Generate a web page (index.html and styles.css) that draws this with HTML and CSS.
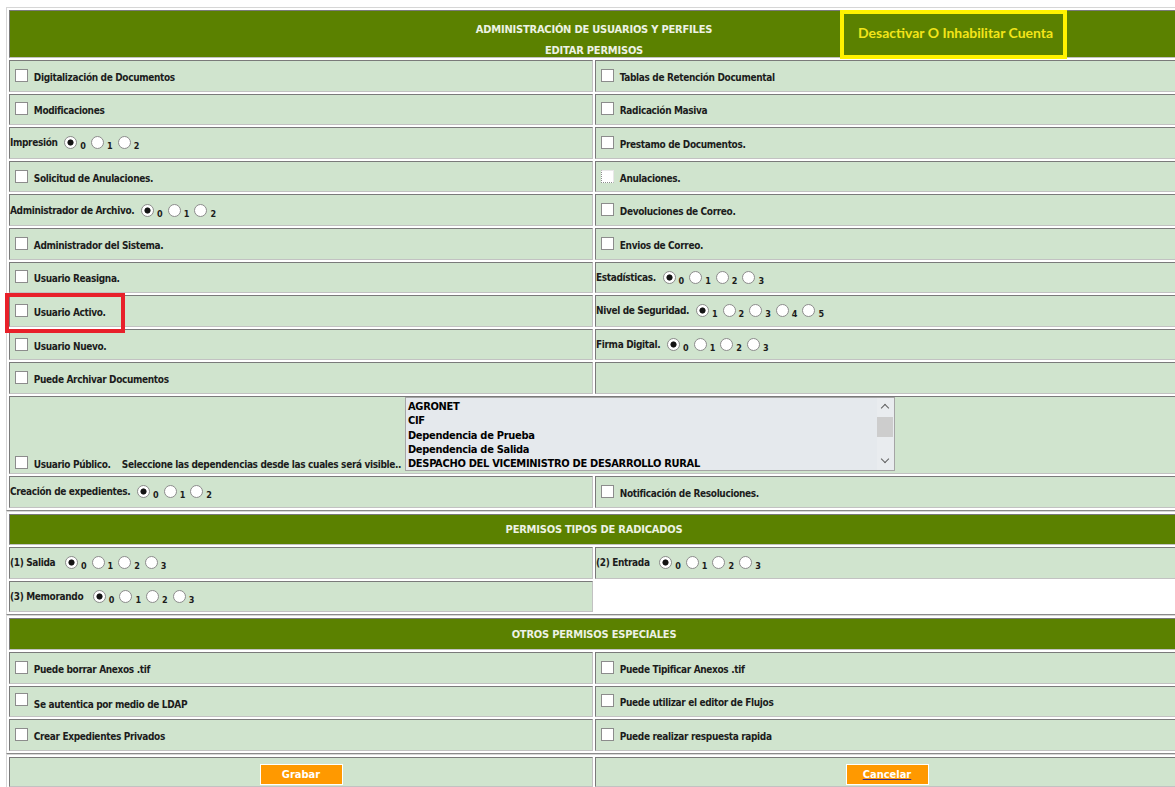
FILE: index.html
```html
<!DOCTYPE html>
<html lang="es">
<head>
<meta charset="utf-8">
<title>Editar permisos</title>
<link rel="stylesheet" href="styles.css">
</head>
<body>
<div class="page">

  <table class="grid">
    <colgroup><col class="half"><col class="half"></colgroup>
    <tr>
      <td colspan="2" class="head head-main">
        <div class="head-inner">
          <div class="head-line">ADMINISTRACIÓN DE USUARIOS Y PERFILES</div>
          <div class="head-line">EDITAR PERMISOS</div>
          <a class="deactivate" href="#">Desactivar O Inhabilitar Cuenta</a>
        </div>
      </td>
    </tr>
    <tr>
      <td><input type="checkbox" class="cb"> Digitalización de Documentos</td>
      <td><input type="checkbox" class="cb"> Tablas de Retención Documental</td>
    </tr>
    <tr>
      <td><input type="checkbox" class="cb"> Modificaciones</td>
      <td><input type="checkbox" class="cb"> Radicación Masiva</td>
    </tr>
    <tr>
      <td>Impresión <input type="radio" name="imp" class="rb" checked><span class="n">0</span><input type="radio" name="imp" class="rb"><span class="n">1</span><input type="radio" name="imp" class="rb"><span class="n">2</span></td>
      <td><input type="checkbox" class="cb"> Prestamo de Documentos.</td>
    </tr>
    <tr>
      <td><input type="checkbox" class="cb"> Solicitud de Anulaciones.</td>
      <td><input type="checkbox" class="cb cb-focus"> Anulaciones.</td>
    </tr>
    <tr>
      <td>Administrador de Archivo. <input type="radio" name="arc" class="rb" checked><span class="n">0</span><input type="radio" name="arc" class="rb"><span class="n">1</span><input type="radio" name="arc" class="rb"><span class="n">2</span></td>
      <td><input type="checkbox" class="cb"> Devoluciones de Correo.</td>
    </tr>
    <tr>
      <td><input type="checkbox" class="cb"> Administrador del Sistema.</td>
      <td><input type="checkbox" class="cb"> Envios de Correo.</td>
    </tr>
    <tr>
      <td><input type="checkbox" class="cb"> Usuario Reasigna.</td>
      <td>Estadísticas. <input type="radio" name="est" class="rb" checked><span class="n">0</span><input type="radio" name="est" class="rb"><span class="n">1</span><input type="radio" name="est" class="rb"><span class="n">2</span><input type="radio" name="est" class="rb"><span class="n">3</span></td>
    </tr>
    <tr>
      <td><input type="checkbox" class="cb"> Usuario Activo.</td>
      <td>Nivel de Seguridad. <input type="radio" name="niv" class="rb" checked><span class="n">1</span><input type="radio" name="niv" class="rb"><span class="n">2</span><input type="radio" name="niv" class="rb"><span class="n">3</span><input type="radio" name="niv" class="rb"><span class="n">4</span><input type="radio" name="niv" class="rb"><span class="n">5</span></td>
    </tr>
    <tr>
      <td><input type="checkbox" class="cb"> Usuario Nuevo.</td>
      <td>Firma Digital. <input type="radio" name="fir" class="rb" checked><span class="n">0</span><input type="radio" name="fir" class="rb"><span class="n">1</span><input type="radio" name="fir" class="rb"><span class="n">2</span><input type="radio" name="fir" class="rb"><span class="n">3</span></td>
    </tr>
    <tr>
      <td><input type="checkbox" class="cb"> Puede Archivar Documentos</td>
      <td></td>
    </tr>
    <tr>
      <td colspan="2" class="public"><input type="checkbox" class="cb"> Usuario Público.&nbsp;&nbsp;&nbsp; Seleccione las dependencias desde las cuales será visible.. <div class="listbox"><div class="listbox-body"><div class="list-items"><div>AGRONET</div><div>CIF</div><div>Dependencia de Prueba</div><div>Dependencia de Salida</div><div>DESPACHO DEL VICEMINISTRO DE DESARROLLO RURAL</div></div><div class="scroll"><span class="arrow up"></span><span class="thumb"></span><span class="arrow down"></span></div></div></div></td>
    </tr>
    <tr>
      <td>Creación de expedientes. <input type="radio" name="exp" class="rb" checked><span class="n">0</span><input type="radio" name="exp" class="rb"><span class="n">1</span><input type="radio" name="exp" class="rb"><span class="n">2</span></td>
      <td><input type="checkbox" class="cb"> Notificación de Resoluciones.</td>
    </tr>
  </table>

  <table class="grid">
    <colgroup><col class="half"><col class="half"></colgroup>
    <tr><td colspan="2" class="head">PERMISOS TIPOS DE RADICADOS</td></tr>
    <tr>
      <td>(1) Salida&nbsp; <input type="radio" name="sal" class="rb" checked><span class="n">0</span><input type="radio" name="sal" class="rb"><span class="n">1</span><input type="radio" name="sal" class="rb"><span class="n">2</span><input type="radio" name="sal" class="rb"><span class="n">3</span></td>
      <td>(2) Entrada&nbsp; <input type="radio" name="ent" class="rb" checked><span class="n">0</span><input type="radio" name="ent" class="rb"><span class="n">1</span><input type="radio" name="ent" class="rb"><span class="n">2</span><input type="radio" name="ent" class="rb"><span class="n">3</span></td>
    </tr>
    <tr>
      <td>(3) Memorando&nbsp; <input type="radio" name="mem" class="rb" checked><span class="n">0</span><input type="radio" name="mem" class="rb"><span class="n">1</span><input type="radio" name="mem" class="rb"><span class="n">2</span><input type="radio" name="mem" class="rb"><span class="n">3</span></td>
    </tr>
  </table>

  <table class="grid">
    <colgroup><col class="half"><col class="half"></colgroup>
    <tr><td colspan="2" class="head">OTROS PERMISOS ESPECIALES</td></tr>
    <tr>
      <td><input type="checkbox" class="cb"> Puede borrar Anexos .tif</td>
      <td><input type="checkbox" class="cb"> Puede Tipificar Anexos .tif</td>
    </tr>
    <tr>
      <td><input type="checkbox" class="cb cb-up"> Se autentica por medio de LDAP</td>
      <td><input type="checkbox" class="cb"> Puede utilizar el editor de Flujos</td>
    </tr>
    <tr>
      <td><input type="checkbox" class="cb"> Crear Expedientes Privados</td>
      <td><input type="checkbox" class="cb"> Puede realizar respuesta rapida</td>
    </tr>
  </table>

  <table class="grid">
    <colgroup><col class="half"><col class="half"></colgroup>
    <tr>
      <td class="actions"><span class="btn">Grabar</span></td>
      <td class="actions"><a class="btn" href="#">Cancelar</a></td>
    </tr>
  </table>

  <div class="mark-red"></div>
</div>
</body>
</html>
```

FILE: styles.css
```css
html, body {
  margin: 0;
  background: #fff;
  overflow: hidden;
}

.page {
  position: relative;
  padding: 7px 0 0 6px;
}

.grid {
  width: 1176px;
  table-layout: fixed;
  border-collapse: separate;
  border-spacing: 2px;
  border: 1px solid;
  border-color: #d6d6d6 #8a8a8a #8a8a8a #d6d6d6;
  background: #fff;
}

.half { width: 50%; }

.grid td {
  box-sizing: border-box;
  height: 31.6px;
  padding: 0;
  background: #d0e4ce;
  border: 1px solid;
  border-color: #7a7a7a #c2c2c2 #c2c2c2 #7a7a7a;
  vertical-align: middle;
  white-space: nowrap;
  color: #1c1c1c;
  font: bold 10px "DejaVu Sans Condensed", "DejaVu Sans", sans-serif;
  letter-spacing: -0.35px;
}

.grid td.head {
  background: #5b8100;
  color: #edf2e4;
  text-align: center;
  font-size: 11px;
  letter-spacing: -0.2px;
}

.head-inner {
  position: relative;
  height: 46px;
  padding-top: 8px;
  box-sizing: border-box;
}

.head-line {
  line-height: 21px;
}

/* account deactivation link, boxed in yellow */
.deactivate {
  position: absolute;
  left: 830px;
  top: -1px;
  width: 205px;
  height: 41px;
  border: 4px solid #fff200;
  color: #f2e51a;
  text-decoration: none;
  font: 700 14px Lato, "Open Sans", sans-serif;
  letter-spacing: 0;
  line-height: 38px;
  text-align: left;
  padding-left: 14px;
  box-sizing: content-box;
}

/* checkbox */
.cb {
  appearance: none;
  -webkit-appearance: none;
  width: 13px;
  height: 13px;
  margin: 0 3px 0 5px;
  border: 1px solid #8c8c8c;
  background: #fff;
  vertical-align: -1px;
  box-sizing: border-box;
}

.cb-up {
  vertical-align: 2px;
}

.cb-focus {
  border-style: solid solid dotted dotted;
  border-color: #e8e8e8 #e8e8e8 #8c8c8c #8c8c8c;
}

/* radio */
.rb {
  appearance: none;
  -webkit-appearance: none;
  width: 13px;
  height: 13px;
  margin: 0 3px 0 4px;
  border: 1px solid #8c8c8c;
  border-radius: 50%;
  background: #fff;
  vertical-align: -3px;
  box-sizing: border-box;
}

.rb:checked {
  background: radial-gradient(circle, #141414 0 2.7px, #fff 3.4px);
}

.n {
  position: relative;
  top: 3px;
  font-size: 9px;
  letter-spacing: 0;
  margin-right: 1px;
}

/* dependency list */
.grid td.public {
  height: 78px;
  vertical-align: bottom;
  padding-bottom: 2px;
}

.listbox {
  display: inline-block;
  overflow: hidden;
  vertical-align: -3px;
  width: 490px;
  height: 74px;
  margin-left: 1px;
  box-sizing: border-box;
  border: 1px solid #a5a5a5;
  background: #e5e9ed;
  color: #000;
}

.listbox-body {
  display: flex;
  height: 100%;
}

.list-items {
  flex: 1;
  padding: 2px 0 0 2px;
  font: bold 11px "DejaVu Sans Condensed", "DejaVu Sans", sans-serif;
  letter-spacing: -0.3px;
  line-height: 14.3px;
  overflow: hidden;
}

.scroll {
  width: 17px;
  display: flex;
  flex-direction: column;
  align-items: center;
  background: #e9ecef;
}

.arrow {
  width: 5px;
  height: 5px;
  border-left: 1.3px solid #606060;
  border-top: 1.3px solid #606060;
}

.arrow.up { transform: rotate(45deg); margin-top: 7px; }
.arrow.down { transform: rotate(225deg); margin-top: auto; margin-bottom: 8px; }

.thumb {
  width: 16px;
  height: 20px;
  margin-top: 6px;
  background: #cdcdcd;
}

/* bottom buttons */
.grid td.actions {
  text-align: center;
  vertical-align: bottom;
  height: 30px;
}

.btn {
  display: inline-block;
  width: 83px;
  height: 21px;
  box-sizing: border-box;
  border: 1px solid #fff;
  background: #ff9900;
  color: #fff;
  font: bold 11px "DejaVu Sans Condensed", "DejaVu Sans", sans-serif;
  letter-spacing: 0;
  line-height: 19px;
  margin-bottom: 1px;
}

a.btn {
  text-decoration: underline;
  text-decoration-color: #3a2a8a;
}

/* highlight around the active-user option */
.mark-red {
  position: absolute;
  left: 5px;
  top: 293px;
  width: 120px;
  height: 40px;
  border: 4px solid #e8202a;
  box-sizing: border-box;
}
```
